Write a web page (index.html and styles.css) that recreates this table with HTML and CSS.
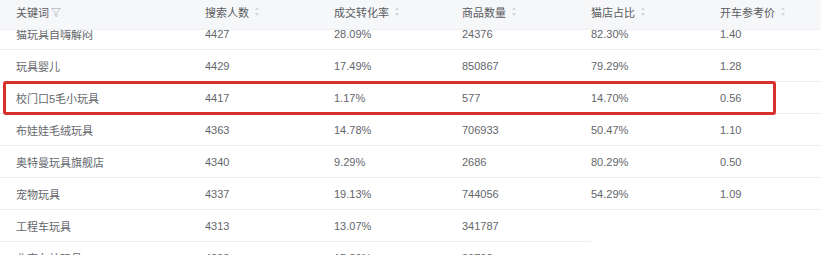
FILE: index.html
```html
<!DOCTYPE html>
<html lang="zh">
<head>
<meta charset="utf-8">
<link rel="stylesheet" href="styles.css">
</head>
<body>
<div class="table">
  <div class="row head">
    <div class="cell">关键词<svg class="filter" width="10" height="9" viewBox="0 0 10 9"><path d="M0.5 0.5 H9.5 L6 4.5 V8.5 L4 7.5 V4.5 Z" fill="none" stroke="#c0c4cc" stroke-width="1"/></svg></div>
    <div class="cell">搜索人数<span class="sort"></span></div>
    <div class="cell">成交转化率<span class="sort"></span></div>
    <div class="cell">商品数量<span class="sort"></span></div>
    <div class="cell">猫店占比<span class="sort"></span></div>
    <div class="cell">开车参考价<span class="sort"></span></div>
  </div>
  <div class="body">
    <div class="scroll">
      <div class="row"><div class="cell">猫玩具自嗨解闷</div><div class="cell">4427</div><div class="cell">28.09%</div><div class="cell">24376</div><div class="cell">82.30%</div><div class="cell">1.40</div></div>
      <div class="row"><div class="cell">玩具婴儿</div><div class="cell">4429</div><div class="cell">17.49%</div><div class="cell">850867</div><div class="cell">79.29%</div><div class="cell">1.28</div></div>
      <div class="row marked"><div class="cell">校门口5毛小玩具</div><div class="cell">4417</div><div class="cell">1.17%</div><div class="cell">577</div><div class="cell">14.70%</div><div class="cell">0.56</div></div>
      <div class="row"><div class="cell">布娃娃毛绒玩具</div><div class="cell">4363</div><div class="cell">14.78%</div><div class="cell">706933</div><div class="cell">50.47%</div><div class="cell">1.10</div></div>
      <div class="row"><div class="cell">奥特曼玩具旗舰店</div><div class="cell">4340</div><div class="cell">9.29%</div><div class="cell">2686</div><div class="cell">80.29%</div><div class="cell">0.50</div></div>
      <div class="row"><div class="cell">宠物玩具</div><div class="cell">4337</div><div class="cell">19.13%</div><div class="cell">744056</div><div class="cell">54.29%</div><div class="cell">1.09</div></div>
      <div class="row partial"><div class="cell">工程车玩具</div><div class="cell">4313</div><div class="cell">13.07%</div><div class="cell">341787</div><div class="cell blank"></div><div class="cell blank"></div></div>
      <div class="row"><div class="cell">北京车站玩具</div><div class="cell">4303</div><div class="cell">15.20%</div><div class="cell">30790</div><div class="cell"></div><div class="cell"></div></div>
    </div>
  </div>
</div>
</body>
</html>
```

FILE: styles.css
```css
html, body {
  margin: 0;
  padding: 0;
  background: #ffffff;
}

.table {
  width: 821px;
  height: 255px;
  overflow: hidden;
  position: relative;
  font-family: "Liberation Sans", "Noto Sans CJK SC", sans-serif;
  font-size: 11px;
  color: #63666b;
}

.row {
  display: grid;
  grid-template-columns: 205px 129px 128px 129px 129px 1fr;
  height: 32px;
}

.cell {
  display: flex;
  align-items: center;
  border-bottom: 1px solid #ebeef5;
  white-space: nowrap;
}

.cell:first-child {
  padding-left: 16px;
}

.head {
  height: 30px;
  background: #f6f7f9;
  position: relative;
  z-index: 2;
}

.head .cell {
  border-bottom: 1px solid #eef0f4;
  padding-bottom: 6px;
  color: #5a5c61;
}

.filter {
  margin-left: 2px;
  margin-top: 2px;
}

.sort {
  position: relative;
  width: 5px;
  height: 9px;
  margin-left: 6px;
}

.sort::before,
.sort::after {
  content: "";
  position: absolute;
  left: 0;
  border-left: 2.5px solid transparent;
  border-right: 2.5px solid transparent;
}

.sort::before {
  top: 0;
  border-bottom: 3px solid #d4d7de;
}

.sort::after {
  bottom: 0;
  border-top: 3px solid #d4d7de;
}

.body {
  height: 225px;
  overflow: hidden;
}

.scroll {
  margin-top: -12px;
}

.marked {
  position: relative;
}

.marked::after {
  content: "";
  position: absolute;
  left: 3px;
  top: -1px;
  width: 767px;
  height: 28px;
  border: 3px solid #d8302b;
  border-radius: 3px;
}

.partial .blank {
  border-bottom-color: transparent;
}
```
